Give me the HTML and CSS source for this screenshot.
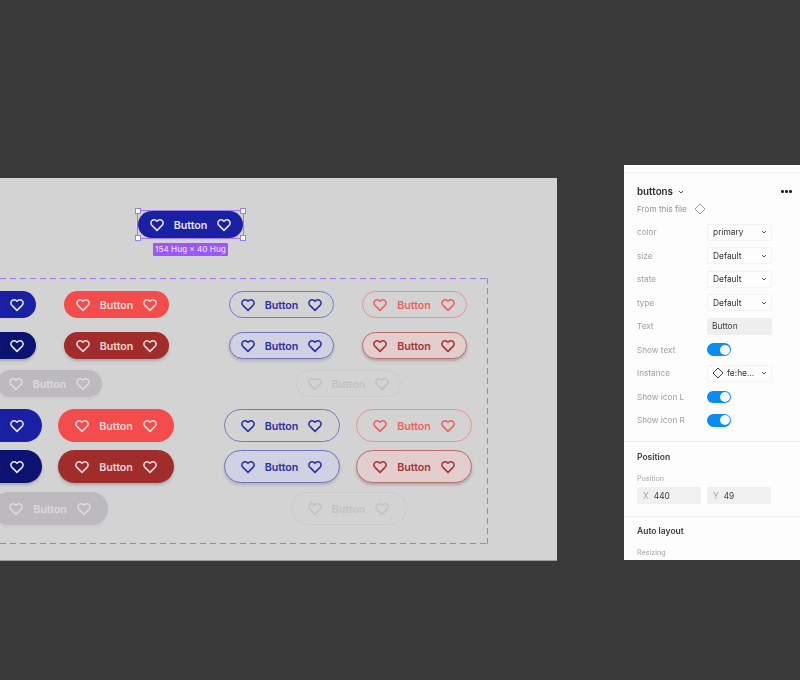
FILE: index.html
```html
<!DOCTYPE html>
<html lang="en">
<head>
<meta charset="utf-8">
<title>buttons</title>
<link rel="stylesheet" href="styles.css">
</head>
<body>
<svg class="defs" aria-hidden="true">
  <symbol id="heart" viewBox="0 0 24 24"><path d="M20.84 4.61a5.5 5.5 0 0 0-7.78 0L12 5.67l-1.06-1.06a5.5 5.5 0 0 0-7.78 7.78l1.06 1.06L12 21.23l7.78-7.78 1.06-1.06a5.5 5.5 0 0 0 0-7.78z"/></symbol>
  <symbol id="chev" viewBox="0 0 8 8"><path d="M2 3l2 2 2-2"/></symbol>
  <symbol id="diamond" viewBox="0 0 12 12"><path d="M6 1l5 5-5 5-5-5z"/></symbol>
</svg>
<main class="stage">
  <section class="canvas">
    <div class="selected">
      <a class="btn primary sel-btn"><svg class="ic"><use href="#heart"/></svg><span>Button</span><svg class="ic"><use href="#heart"/></svg></a>
      <i class="handle tl"></i><i class="handle tr"></i><i class="handle bl"></i><i class="handle br"></i>
      <span class="size-tag">154 Hug × 40 Hug</span>
    </div>
    <div class="frame"></div>

    <a class="btn primary s c1 r1"><svg class="ic"><use href="#heart"/></svg><span>Button</span><svg class="ic"><use href="#heart"/></svg></a>
    <a class="btn danger s c2 r1"><svg class="ic"><use href="#heart"/></svg><span>Button</span><svg class="ic"><use href="#heart"/></svg></a>
    <a class="btn o-primary s c3 r1"><svg class="ic"><use href="#heart"/></svg><span>Button</span><svg class="ic"><use href="#heart"/></svg></a>
    <a class="btn o-danger s c4 r1"><svg class="ic"><use href="#heart"/></svg><span>Button</span><svg class="ic"><use href="#heart"/></svg></a>

    <a class="btn primary-h s c1 r2"><svg class="ic"><use href="#heart"/></svg><span>Button</span><svg class="ic"><use href="#heart"/></svg></a>
    <a class="btn danger-h s c2 r2"><svg class="ic"><use href="#heart"/></svg><span>Button</span><svg class="ic"><use href="#heart"/></svg></a>
    <a class="btn o-primary-h s c3 r2"><svg class="ic"><use href="#heart"/></svg><span>Button</span><svg class="ic"><use href="#heart"/></svg></a>
    <a class="btn o-danger-h s c4 r2"><svg class="ic"><use href="#heart"/></svg><span>Button</span><svg class="ic"><use href="#heart"/></svg></a>

    <a class="btn off s c5 r3"><svg class="ic"><use href="#heart"/></svg><span>Button</span><svg class="ic"><use href="#heart"/></svg></a>
    <a class="btn o-off s c6 r3"><svg class="ic"><use href="#heart"/></svg><span>Button</span><svg class="ic"><use href="#heart"/></svg></a>

    <a class="btn primary l d1 r4"><svg class="ic"><use href="#heart"/></svg><span>Button</span><svg class="ic"><use href="#heart"/></svg></a>
    <a class="btn danger l d2 r4"><svg class="ic"><use href="#heart"/></svg><span>Button</span><svg class="ic"><use href="#heart"/></svg></a>
    <a class="btn o-primary l d3 r4"><svg class="ic"><use href="#heart"/></svg><span>Button</span><svg class="ic"><use href="#heart"/></svg></a>
    <a class="btn o-danger l d4 r4"><svg class="ic"><use href="#heart"/></svg><span>Button</span><svg class="ic"><use href="#heart"/></svg></a>

    <a class="btn primary-h l d1 r5"><svg class="ic"><use href="#heart"/></svg><span>Button</span><svg class="ic"><use href="#heart"/></svg></a>
    <a class="btn danger-h l d2 r5"><svg class="ic"><use href="#heart"/></svg><span>Button</span><svg class="ic"><use href="#heart"/></svg></a>
    <a class="btn o-primary-h l d3 r5"><svg class="ic"><use href="#heart"/></svg><span>Button</span><svg class="ic"><use href="#heart"/></svg></a>
    <a class="btn o-danger-h l d4 r5"><svg class="ic"><use href="#heart"/></svg><span>Button</span><svg class="ic"><use href="#heart"/></svg></a>

    <a class="btn off l d5 r6"><svg class="ic"><use href="#heart"/></svg><span>Button</span><svg class="ic"><use href="#heart"/></svg></a>
    <a class="btn o-off l d6 r6"><svg class="ic"><use href="#heart"/></svg><span>Button</span><svg class="ic"><use href="#heart"/></svg></a>
  </section>

  <aside class="panel">
    <header class="panel-head">
      <strong class="panel-title">buttons</strong>
      <svg class="chev"><use href="#chev"/></svg>
      <span class="dots"><i></i><i></i><i></i></span>
    </header>
    <div class="source"><span>From this file</span><svg class="src-diamond"><use href="#diamond"/></svg></div>
    <div class="props">
      <div class="prop"><label>color</label><div class="select"><span>primary</span><svg class="chev"><use href="#chev"/></svg></div></div>
      <div class="prop"><label>size</label><div class="select"><span>Default</span><svg class="chev"><use href="#chev"/></svg></div></div>
      <div class="prop"><label>state</label><div class="select"><span>Default</span><svg class="chev"><use href="#chev"/></svg></div></div>
      <div class="prop"><label>type</label><div class="select"><span>Default</span><svg class="chev"><use href="#chev"/></svg></div></div>
      <div class="prop"><label>Text</label><div class="textval">Button</div></div>
      <div class="prop"><label>Show text</label><div class="toggle"></div></div>
      <div class="prop"><label>Instance</label><div class="select"><svg class="inst-diamond"><use href="#diamond"/></svg><span class="grow">fe:he...</span><svg class="chev"><use href="#chev"/></svg></div></div>
      <div class="prop"><label>Show icon L</label><div class="toggle"></div></div>
      <div class="prop"><label>Show icon R</label><div class="toggle"></div></div>
    </div>
    <section class="group position">
      <h2>Position</h2>
      <h3>Position</h3>
      <div class="fields">
        <div class="field"><em>X</em><span>440</span></div>
        <div class="field"><em>Y</em><span>49</span></div>
      </div>
    </section>
    <section class="group layout">
      <h2>Auto layout</h2>
      <h3>Resizing</h3>
    </section>
  </aside>
</main>
</body>
</html>
```
FILE: styles.css
```css
* { box-sizing: border-box; }
html, body { margin: 0; height: 100%; }
body { background: #3a3a3a; font-family: Inter, "Liberation Sans", sans-serif; overflow: hidden; }
.defs { position: absolute; width: 0; height: 0; }
.stage { position: relative; width: 800px; height: 680px; overflow: hidden; filter: blur(0.35px); }

/* Figma canvas */
.canvas { position: absolute; left: 0; top: 178px; width: 557px; height: 383px; background: #d3d3d3; border-bottom: 1px solid #9b9b9b; overflow: hidden; }
.frame {
  --dash: #a279ec;
  position: absolute; left: -60px; top: 100px; width: 548px; height: 266px;
  background:
    repeating-linear-gradient(90deg, var(--dash) 0 6px, transparent 6px 10px) left top / 100% 1px no-repeat,
    repeating-linear-gradient(90deg, var(--dash) 0 6px, transparent 6px 10px) left bottom / 100% 1px no-repeat,
    repeating-linear-gradient(180deg, var(--dash) 0 6px, transparent 6px 10px) right top / 1px 100% no-repeat;
}

/* Buttons */
.btn { position: absolute; display: flex; align-items: center; justify-content: center; gap: 10px; border-radius: 17px; font-weight: 600; font-size: 10.7px; color: #e7e5ec; }
.btn span { margin-top: 1px; }
.btn.s { width: 105px; height: 27px; }
.btn.l { width: 116px; height: 33px; }
.ic { width: 14px; height: 14px; fill: none; stroke: currentColor; stroke-width: 2.7; stroke-linecap: round; stroke-linejoin: round; flex: none; }

.primary { background: #1a20a3; }
.danger { background: #f44b4b; color: #f2dedd; }
.primary-h { background: #0c1270; box-shadow: 0 2px 3px rgba(0,0,0,.2); }
.danger-h { background: #a12c2c; color: #ecd8d8; box-shadow: 0 2px 3px rgba(0,0,0,.2); }
.off { background: #bcb9bf; color: #dcdbde; box-shadow: 0 2px 3px rgba(0,0,0,.05); }
.o-primary { border: 1px solid #7679c2; color: #2a30a6; }
.o-danger { border: 1px solid #ee8f8d; color: #f35e5e; }
.o-primary-h { border: 1px solid #6f72c0; background: #d0d1e2; color: #2a30a6; box-shadow: 0 2px 3px rgba(0,0,0,.15); }
.o-danger-h { border: 1px solid #bd6c6c; background: #e3cdcd; color: #a63535; box-shadow: 0 2px 3px rgba(0,0,0,.2); }
.o-off { border: 1px dotted #c3c3c3; color: #c2c2c2; }

/* Free-canvas placement of the component variants */
.c1 { left: -69px; } .c2 { left: 64px; } .c3 { left: 229px; } .c4 { left: 361.5px; } .c5 { left: -3px; } .c6 { left: 296px; }
.d1 { left: -74.5px; } .d2 { left: 58px; } .d3 { left: 223.5px; } .d4 { left: 356px; } .d5 { left: -8px; } .d6 { left: 290.5px; }
.r1 { top: 113px; } .r2 { top: 154px; } .r3 { top: 192px; } .r4 { top: 231px; } .r5 { top: 272px; } .r6 { top: 314px; }

/* Selection */
.selected { position: absolute; left: 138px; top: 33px; width: 105px; height: 27px; outline: 1px solid #a279ec; }
.sel-btn { left: 0; top: 0; width: 105px; height: 27px; }
.handle { position: absolute; width: 6px; height: 6px; background: #fff; border: 1px solid #a279ec; }
.tl { left: -3px; top: -3px; } .tr { right: -3px; top: -3px; } .bl { left: -3px; bottom: -3px; } .br { right: -3px; bottom: -3px; }
.size-tag { position: absolute; left: 15px; top: 32px; width: 75px; height: 13px; background: #9b58f5; color: #e9ddfb; border-radius: 1px; font-size: 8.2px; line-height: 13px; font-weight: 500; text-align: center; white-space: nowrap; }

/* Properties panel */
.panel { position: absolute; left: 624px; top: 165px; width: 176px; height: 395px; background: #fdfdfd; overflow: hidden; color: #333; font-size: 8.4px; }
.panel-head { display: flex; align-items: center; height: 17px; margin: 7px 0 0; padding: 10px 7px 0 13px; box-sizing: content-box; border-top: 1px solid #f1f1f1; }
.panel-title { font-size: 9.8px; font-weight: 600; color: #2c2c2c; }
.chev { width: 8px; height: 8px; fill: none; stroke: #555; stroke-width: 1; flex: none; }
.panel-head .chev { margin-left: 4px; }
.dots { display: flex; gap: 1.5px; margin-left: auto; margin-right: 1px; }
.dots i { width: 2.6px; height: 2.6px; background: #222; border-radius: 50%; }
.source { display: flex; align-items: center; gap: 7px; margin: 0 0 0 13px; height: 17px; color: #949494; font-size: 8.2px; }
.src-diamond { width: 12px; height: 12px; fill: none; stroke: #9c9c9c; stroke-width: 1; }
.props { display: flex; flex-direction: column; gap: 6.55px; margin: 6.5px 0 0 13px; }
.prop { display: flex; align-items: center; height: 17px; }
.prop label { width: 70px; color: #a0a0a0; font-size: 8.2px; }
.select { display: flex; align-items: center; justify-content: space-between; width: 65px; height: 17px; padding: 0 3px 0 5px; border: 1px dotted #e9e9e9; border-radius: 2px; color: #333; }
.grow { flex: 1; }
.inst-diamond { width: 12px; height: 12px; margin: 0 3px 0 -1px; fill: none; stroke: #444; stroke-width: 1; flex: none; }
.textval { width: 65px; height: 17px; line-height: 17px; padding-left: 5px; background: #eeeeee; border-radius: 2px; color: #3c3c3c; }
.toggle { position: relative; width: 24px; height: 12.5px; background: #0a8cf5; border-radius: 7px; }
.toggle::after { content: ""; position: absolute; right: 1px; top: 1.25px; width: 10px; height: 10px; border-radius: 50%; background: #f6f6f6; }
.group { margin-top: 12.5px; padding: 0 0 0 13px; border-top: 1px solid #eeeeee; }
.group h2 { margin: 0; font-size: 8.5px; font-weight: 600; color: #3d3d3d; line-height: 12px; }
.group h3 { margin: 0; font-size: 7.2px; font-weight: 400; color: #a4a4a4; line-height: 10px; }
.position { padding-top: 9px; height: 75px; }
.position h3 { margin-top: 11px; }
.fields { display: flex; gap: 6px; margin-top: 3px; }
.field { display: flex; align-items: center; gap: 5px; width: 64px; height: 16.5px; padding-left: 6px; background: #f0f0f0; border-radius: 2px; color: #3e3e3e; }
.field em { font-style: normal; color: #a5a5a5; }
.layout { margin-top: 0; padding-top: 8px; }
.layout h3 { margin-top: 11px; }
```
